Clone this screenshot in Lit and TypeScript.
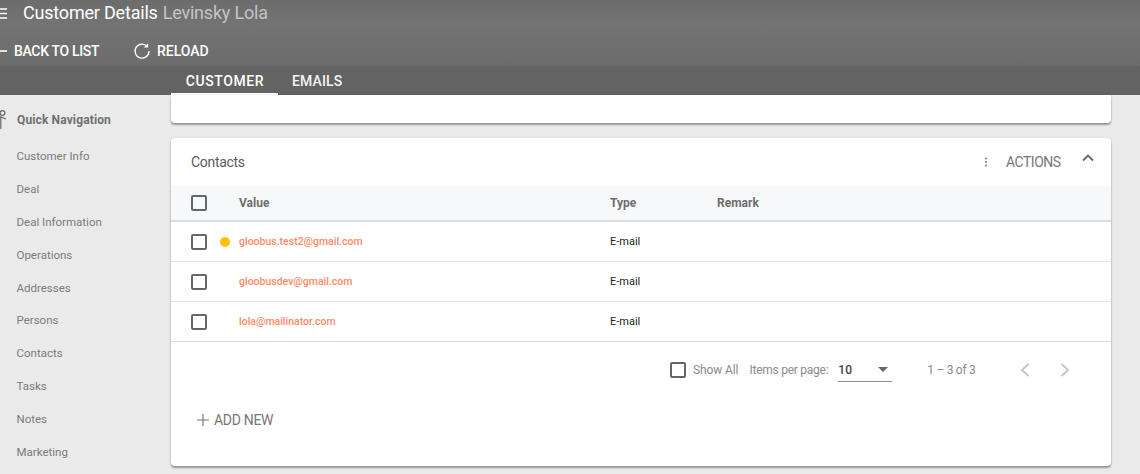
import {LitElement, html, css} from 'lit';
import {customElement} from 'lit/decorators.js';

const NAV = ['Customer Info', 'Deal', 'Deal Information', 'Operations', 'Addresses', 'Persons', 'Contacts', 'Tasks', 'Notes', 'Marketing'];
const ROWS = [
  {value: 'gloobus.test2@gmail.com', type: 'E-mail', dot: true},
  {value: 'gloobusdev@gmail.com', type: 'E-mail', dot: false},
  {value: 'lola@mailinator.com', type: 'E-mail', dot: false},
];

@customElement('app-root')
export class AppRoot extends LitElement {
  static styles = css`
    :host {
      display: block;
      width: 1140px;
      height: 474px;
      overflow: hidden;
      background: #eaeaea;
      font-family: Roboto, 'Liberation Sans', sans-serif;
      color: #777;
    }
    .header {
      height: 66px;
      background: linear-gradient(#6c6c6c, #737373 35%, #6c6c6c);
      color: #fff;
    }
    .title-row {
      display: flex;
      align-items: center;
      height: 25px;
      font-size: 18px;
      letter-spacing: -0.2px;
    }
    .title-row svg { margin: 2px 16px 0 -7px; flex: none; }
    .title-row span { color: #c4c4c4; margin-left: 5px; }
    .actions {
      display: flex;
      align-items: center;
      height: 51px;
      font-size: 14px;
      font-weight: 500;
    }
    .actions > div { display: flex; align-items: center; }
    .back { width: 134px; letter-spacing: -0.33px; }
    .back svg { margin: 0 7px 0 -1px; }
    .reload svg { margin-right: 6px; margin-left: -1px; }
    .tabs {
      display: flex;
      height: 29px;
      padding-left: 171px;
      background: #636363;
      color: #fff;
      font-size: 14px;
      font-weight: 500;
    }
    .tab {
      display: flex;
      align-items: center;
      justify-content: center;
      height: 29px;
      box-sizing: border-box;
    }
    .tab.active { width: 107px; border-bottom: 2px solid #fff; padding: 2px 0 0 1px; letter-spacing: 0.6px; }
    .tab:not(.active) { padding: 0 14px; color: #f4f4f4; letter-spacing: 0.15px; }
    .body { display: flex; }
    .side { width: 171px; flex: none; font-size: 11.5px; }
    .side-title {
      display: flex;
      align-items: center;
      height: 50px;
      font-size: 12px;
      font-weight: 700;
      letter-spacing: 0.13px;
      color: #6f6f6f;
    }
    .side-title svg { margin: -2px 5px 0 -7px; }
    .side a { display: block; height: 32.88px; line-height: 32.88px; padding-left: 16.5px; color: #7b7b7b; }
    .side a:first-of-type { margin-top: -5px; }
    .main { width: 940px; flex: none; }
    .card {
      background: #fff;
      border-radius: 4px;
      box-shadow: 0 2px 2px rgba(0, 0, 0, 0.35), 0 0 2px rgba(0, 0, 0, 0.12);
    }
    .top-card { height: 28px; border-radius: 0 0 4px 4px; margin-bottom: 15px; }
    .contacts { height: 328px; }
    .card-head {
      display: flex;
      align-items: center;
      height: 48px;
      padding-left: 20px;
      font-size: 14px;
      color: #5c5c5c;
    }
    .card-head .name { flex: 1; letter-spacing: -0.3px; }
    .card-head .more { margin-right: 18px; margin-left: -1px; }
    .card-head .label { color: #777; width: 76px; letter-spacing: -0.5px; }
    .card-head .up { margin-right: 17px; margin-top: -9px; }
    .row {
      display: grid;
      grid-template-columns: 29px 19px 371px 107px 1fr;
      align-items: center;
      padding-left: 20px;
      font-size: 10.5px;
      font-weight: 500;
      height: 39px;
      border-bottom: 1px solid #e4e7e8;
      color: #333;
    }
    .row .type { font-size: 11px; font-weight: 400; color: #222; }
    .row.head {
      height: 34px;
      background: #f7f8fa;
      border-bottom: 2px solid #d8dfe1;
      font-size: 12px;
      font-weight: 700;
      color: #6e6e6e;
    }
    .row.last { border-bottom: 1px solid #d8dfe1; }
    .mail { color: #ff8a65; }
    .check {
      display: block;
      box-sizing: border-box;
      width: 16px;
      height: 16px;
      border: 2px solid #666;
      border-radius: 2px;
    }
    .dot { width: 10px; height: 10px; border-radius: 50%; background: #ffc107; }
    .pager {
      display: flex;
      align-items: center;
      height: 55px;
      padding-left: 499px;
      font-size: 12px;
      color: #8a8a8a;
    }
    .pager .check { margin-right: 7px; }
    .pager .show { letter-spacing: -0.1px; }
    .pager .per { margin-left: 11px; margin-right: 10px; letter-spacing: -0.25px; }
    .select {
      display: flex;
      align-items: center;
      justify-content: space-between;
      box-sizing: border-box;
      width: 54px;
      height: 24px;
      margin-top: 1px;
      border-bottom: 1px solid #8f8f8f;
      color: #444;
      font-weight: 500;
      padding: 0 4px 0 0;
    }
    .caret { width: 0; height: 0; border: 5px solid transparent; border-top-color: #666; border-bottom: 0; }
    .range { margin-left: 35px; width: 93px; letter-spacing: -0.3px; }
    .pager svg { margin-right: 30px; margin-top: 1px; }
    .add {
      display: flex;
      align-items: center;
      height: 44px;
      margin-top: 1px;
      padding-left: 25px;
      font-size: 14px;
      letter-spacing: -0.3px;
      color: #777;
    }
    .add svg { margin-right: 4px; }
  `;

  render() {
    return html`
      <div class="header">
        <div class="title-row">
          <svg width="14" height="11" viewBox="0 0 14 11"><path d="M0 1h14M0 5.5h14M0 10h14" stroke="#fff" stroke-width="1.5"/></svg>
          Customer Details<span>Levinsky Lola</span>
        </div>
        <div class="actions">
          <div class="back">
            <svg width="8" height="2" viewBox="0 0 8 2"><path d="M0 1h8" stroke="#fff" stroke-width="1.6"/></svg>
            BACK TO LIST
          </div>
          <div class="reload">
            <svg width="18" height="18" viewBox="0 0 18 18" fill="none">
              <path d="M14.2 4.4A7 7 0 1 0 16 9" stroke="#fff" stroke-width="1.4"/>
              <path d="M15.2 1.2v4.3h-4.3z" fill="#fff"/>
            </svg>
            RELOAD
          </div>
        </div>
      </div>
      <div class="tabs">
        <div class="tab active">CUSTOMER</div>
        <div class="tab">EMAILS</div>
      </div>
      <div class="body">
        <div class="side">
          <div class="side-title">
            <svg width="19" height="22" viewBox="0 0 19 22" fill="none" stroke="#666" stroke-width="1.2">
              <circle cx="9.5" cy="5" r="2.4"/><path d="M7.8 9v12M7 8.5l6 2.5"/>
            </svg>
            Quick Navigation
          </div>
          ${NAV.map((n) => html`<a>${n}</a>`)}
        </div>
        <div class="main">
          <div class="card top-card"></div>
          <div class="card contacts">
            <div class="card-head">
              <div class="name">Contacts</div>
              <svg class="more" width="4" height="10" viewBox="0 0 4 10" fill="#777"><circle cx="2" cy="1.5" r="1"/><circle cx="2" cy="5" r="1"/><circle cx="2" cy="8.5" r="1"/></svg>
              <div class="label">ACTIONS</div>
              <svg class="up" width="12" height="8" viewBox="0 0 12 8" fill="none"><path d="M1 6.5l5-5 5 5" stroke="#666" stroke-width="1.8"/></svg>
            </div>
            <div class="row head">
              <span class="check"></span><span></span><span>Value</span><span>Type</span><span>Remark</span>
            </div>
            ${ROWS.map((r, i) => html`
              <div class="row ${i === ROWS.length - 1 ? 'last' : ''}">
                <span class="check"></span>
                <span>${r.dot ? html`<div class="dot"></div>` : ''}</span>
                <span class="mail">${r.value}</span>
                <span class="type">${r.type}</span>
                <span></span>
              </div>
            `)}
            <div class="pager">
              <span class="check"></span>
              <span class="show">Show All</span>
              <span class="per">Items per page:</span>
              <div class="select"><span>10</span><span class="caret"></span></div>
              <span class="range">1 – 3 of 3</span>
              <svg width="10" height="14" viewBox="0 0 10 14" fill="none"><path d="M8.5 1L2 7l6.5 6" stroke="#c4c4c4" stroke-width="1.8"/></svg>
              <svg width="10" height="14" viewBox="0 0 10 14" fill="none"><path d="M1.5 1L8 7l-6.5 6" stroke="#c4c4c4" stroke-width="1.8"/></svg>
            </div>
            <div class="add">
              <svg width="14" height="14" viewBox="0 0 14 14"><path d="M7 1v12M1 7h12" stroke="#777" stroke-width="1.2"/></svg>
              ADD NEW
            </div>
          </div>
        </div>
      </div>
    `;
  }
}
